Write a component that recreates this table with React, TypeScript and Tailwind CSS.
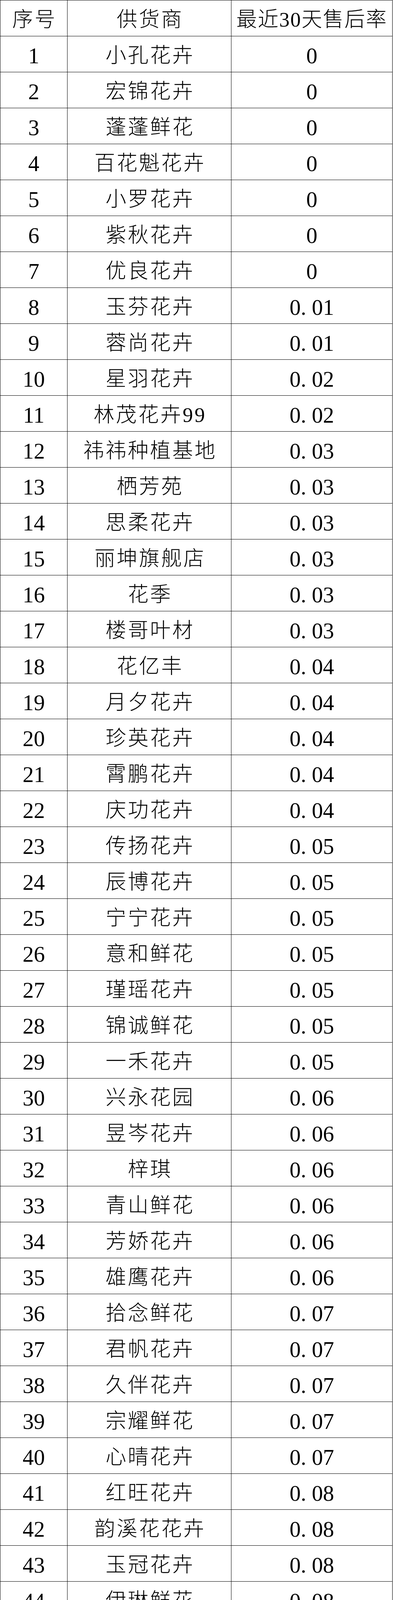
import React from 'react';

// [supplier, rate]
const rows: [string, string][] = [
  ['小孔花卉', '0'],
  ['宏锦花卉', '0'],
  ['蓬蓬鲜花', '0'],
  ['百花魁花卉', '0'],
  ['小罗花卉', '0'],
  ['紫秋花卉', '0'],
  ['优良花卉', '0'],
  ['玉芬花卉', '0.01'],
  ['蓉尚花卉', '0.01'],
  ['星羽花卉', '0.02'],
  ['林茂花卉99', '0.02'],
  ['祎祎种植基地', '0.03'],
  ['栖芳苑', '0.03'],
  ['思柔花卉', '0.03'],
  ['丽坤旗舰店', '0.03'],
  ['花季', '0.03'],
  ['楼哥叶材', '0.03'],
  ['花亿丰', '0.04'],
  ['月夕花卉', '0.04'],
  ['珍英花卉', '0.04'],
  ['霄鹏花卉', '0.04'],
  ['庆功花卉', '0.04'],
  ['传扬花卉', '0.05'],
  ['辰博花卉', '0.05'],
  ['宁宁花卉', '0.05'],
  ['意和鲜花', '0.05'],
  ['瑾瑶花卉', '0.05'],
  ['锦诚鲜花', '0.05'],
  ['一禾花卉', '0.05'],
  ['兴永花园', '0.06'],
  ['昱岑花卉', '0.06'],
  ['梓琪', '0.06'],
  ['青山鲜花', '0.06'],
  ['芳娇花卉', '0.06'],
  ['雄鹰花卉', '0.06'],
  ['拾念鲜花', '0.07'],
  ['君帆花卉', '0.07'],
  ['久伴花卉', '0.07'],
  ['宗耀鲜花', '0.07'],
  ['心晴花卉', '0.07'],
  ['红旺花卉', '0.08'],
  ['韵溪花花卉', '0.08'],
  ['玉冠花卉', '0.08'],
  ['伊琳鲜花', '0.08'],
  ['蔷薇花卉', '0.08'],
  ['传情花卉', '0.08'],
  ['远华花卉', '0.08'],
  ['海公牛花卉', '0.08'],
  ['寻薇花卉', '0.08'],
  ['智铭花卉', '0.08'],
  ['花开曦淇', '0.08'],
  ['国润旗舰店', '0.08'],
  ['花里鲜花', '0.09'],
  ['皓洋', '0.09'],
  ['孔孔花卉', '0.09'],
  ['泰韵兴', '0.09'],
  ['拼搏花会', '0.09'],
  ['彤菲种植园', '0.09'],
  ['禾顺花卉', '0.09'],
  ['喜客来永生花', '0.09'],
];

const cell = 'flex items-center justify-center border-r border-b border-black pt-[8px]';

// half-width dot like the Song face in the source sheet
function Rate({ value }: { value: string }) {
  const [a, b] = value.split('.');
  if (b === undefined) return <span>{a}</span>;
  return (
    <span>
      {a}
      <span className="inline-block w-[0.5em] text-left">.</span>
      {b}
    </span>
  );
}

function Row({ no, name, rate }: { no: string; name: React.ReactNode; rate: React.ReactNode }) {
  return (
    <div className="grid grid-cols-[172px_420px_413px] h-[92px]">
      <div className={`${cell} text-[57px]`}>{no}</div>
      <div className={`${cell} text-[53px] tracking-[4px] pl-[4px]`}>{name}</div>
      <div className={`${cell} text-[57px]`}>{rate}</div>
    </div>
  );
}

export default function App() {
  return (
    <div className="w-[1007px] bg-white text-black">
      <div className="w-[1006px] border-t border-l border-black font-['Liberation_Serif','Noto_Sans_CJK_SC',serif] font-light leading-none">
        <div className="grid grid-cols-[172px_420px_413px] h-[92px]">
          <div className={`${cell} text-[53px] tracking-[4px] pl-[4px]`}>序号</div>
          <div className={`${cell} text-[53px] tracking-[4px] pl-[4px]`}>供货商</div>
          <div className={`${cell} text-[53px] tracking-[2px]`}>最近30天售后率</div>
        </div>
        {rows.map(([name, rate], i) => (
          <Row key={i} no={String(i + 1)} name={name} rate={<Rate value={rate} />} />
        ))}
      </div>
    </div>
  );
}
